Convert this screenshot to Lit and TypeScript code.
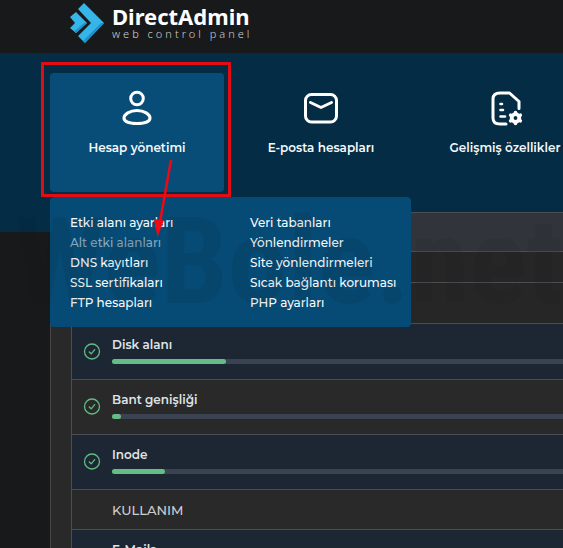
import { LitElement, html, svg, css } from "lit";
import { customElement, property } from "lit/decorators.js";

interface Resource {
  name: string;
  used: number;
}

const userIcon = svg`
  <circle cx="18" cy="8.500" r="6.300"/>
  <path d="M31 28c0 3.600-5.800 5.500-13 5.500s-13-1.900-13-5.500 5.800-7.500 13-7.500 13 3.900 13 7.500z"/>`;
const mailIcon = svg`
  <rect x="2.500" y="4.500" width="31" height="27.500" rx="6"/>
  <path d="M7.500 12.500l10.500 5 10.500-5"/>`;
const featureIcon = svg`
  <path d="M19 34h-6c-4.500 0-7-2-7-6v-19c0-4 2.500-6 7-6h9.500L32 11.500v7"/>
  <path d="M13.500 14h1.500M13.500 20h2.500M13.500 26.500h4.500" stroke-width="2.600"/>
  <circle cx="28.500" cy="28" r="3.800" stroke-width="3.800"/>
  <path d="M28.500 22.500v1M28.500 32.500v1M23.700 25.200l1 .6M32.300 30.200l1 .6M33.300 25.200l-1 .6M24.700 30.200l-1 .6" stroke-width="3.600"/>`;

@customElement("nav-tile")
class NavTile extends LitElement {
  @property() label = "";
  @property({ attribute: false }) icon: unknown;
  @property({ type: Boolean }) open = false;

  static styles = css`
    :host { display: block; }
    .tile {
      width: 100%;
      height: 119px;
      box-sizing: border-box;
      display: flex;
      flex-direction: column;
      align-items: center;
      gap: 12px;
      padding: 17px 0 0;
      border: 0;
      border-radius: 4px;
      background: transparent;
      color: #f4f8fa;
      font: 600 12px/20px Montserrat, Inter, sans-serif;
      white-space: nowrap;
      cursor: pointer;
    }
    .tile[aria-expanded="true"] { background: #074d78; }
    .icon {
      width: 36px;
      height: 36px;
      overflow: visible;
      fill: none;
      stroke: #ffffff;
      stroke-width: 3;
      stroke-linecap: round;
      stroke-linejoin: round;
    }
  `;

  render() {
    return html`<button class="tile" aria-expanded=${this.open ? "true" : "false"}>
      <svg class="icon" viewBox="0 0 36 36" aria-hidden="true">${this.icon}</svg>
      <span>${this.label}</span>
    </button>`;
  }
}

@customElement("app-root")
class AppRoot extends LitElement {
  private links = [
    "Etki alanı ayarları", "Alt etki alanları", "DNS kayıtları", "SSL sertifikaları", "FTP hesapları",
    "Veri tabanları", "Yönlendirmeler", "Site yönlendirmeleri", "Sıcak bağlantı koruması", "PHP ayarları",
  ];

  private resources: Resource[] = [
    { name: "Disk alanı", used: 25.2 },
    { name: "Bant genişliği", used: 2 },
    { name: "Inode", used: 11.8 },
  ];

  static styles = css`
    :host {
      display: block;
      position: relative;
      height: 100vh;
      overflow: hidden;
      background: #18191a;
      color: #dfe3e6;
      font: 600 12px/20px Montserrat, Inter, sans-serif;
    }
    .header {
      height: 53px;
      box-sizing: border-box;
      padding: 0 70px;
      display: flex;
      align-items: flex-start;
      background: #18191a;
    }
    .brand {
      display: flex;
      gap: 8px;
      padding-top: 3px;
      color: #ffffff;
      text-decoration: none;
    }
    .mark { width: 34px; height: 40px; }
    .words { display: flex; flex-direction: column; padding-top: 1px; }
    .name { font: 700 22px/24px "Noto Sans", sans-serif; }
    .tagline { font: 300 11px/12px "Noto Sans", sans-serif; letter-spacing: 3px; color: #cfd2d4; white-space: nowrap; }
    .nav {
      height: 179px;
      box-sizing: border-box;
      padding: 20px 0 0 50px;
      background: #042c45;
      position: relative;
    }
    .tiles { display: grid; grid-template-columns: repeat(3, 174px); gap: 10px; }
    .menu {
      position: absolute;
      z-index: 2;
      left: 50px;
      top: 144px;
      width: 361px;
      height: 130px;
      box-sizing: border-box;
      margin: 0;
      padding: 16px 20px 14px;
      display: grid;
      grid-template-columns: 180px 1fr;
      grid-template-rows: repeat(5, 20px);
      grid-auto-flow: column;
      list-style: none;
      border-radius: 4px;
      background: #064b75;
      font-weight: 500;
    }
    .link { color: #f8fbfd; text-decoration: none; white-space: nowrap; }
    .link.hovered { color: #88a9be; }
    .panel {
      position: relative;
      z-index: 1;
      margin: -20px 0 0 50px;
      padding-left: 20px;
      border-left: 1px solid #454749;
      background: #29292a;
    }
    .rows { border-left: 1px solid #4d5053; }
    .row { box-sizing: border-box; border-top: 1px solid #4a4e52; padding-left: 40px; }
    .heading { height: 39px; background: #31343b; }
    .toolbar { height: 31px; background: #262627; }
    .columns { height: 41px; background: #262627; }
    .resource {
      height: 55px;
      display: grid;
      grid-template-columns: 28px 1fr;
      align-items: center;
      padding-left: 12px;
    }
    .resource:nth-child(4) { height: 56px; }
    .tinted { background: #1d2734; }
    .check { width: 18px; height: 18px; margin-left: -1px; fill: none; stroke: #61bb83; stroke-linecap: round; stroke-linejoin: round; }
    .usage { display: flex; flex-direction: column; gap: 4px; padding-bottom: 5px; }
    .track { height: 5px; border-radius: 3px 0 0 3px; background: #3b4352; }
    .fill { height: 5px; border-radius: 3px; background: #65bc85; }
    .caption { height: 40px; margin: 0; font: 500 13px/40px Montserrat, Inter, sans-serif; color: #cccfd1; }
    .entry { height: 55px; padding-top: 10px; }
    .watermark {
      position: absolute;
      z-index: 3;
      left: 15px;
      top: 202px;
      font: 700 120px/120px "Liberation Sans Narrow", "Roboto Condensed", "Liberation Sans", sans-serif;
      white-space: nowrap;
      color: #101418;
      opacity: 0.08;
      pointer-events: none;
    }
    .annotation {
      position: absolute;
      z-index: 4;
      left: 41px;
      top: 62px;
      width: 190px;
      height: 180px;
      pointer-events: none;
    }
  `;

  private renderResource(item: Resource, index: number) {
    return html`<div class="row resource ${index % 2 ? "" : "tinted"}">
      <svg class="check" viewBox="0 0 18 18" aria-hidden="true">
        <circle cx="9" cy="8.500" r="7.500" stroke-width="1.300"/>
        <path d="M6.300 9l1.900 1.800 3.500-4.200" stroke-width="1.300"/>
      </svg>
      <div class="usage">
        <span>${item.name}</span>
        <div class="track" role="progressbar" aria-label=${item.name} aria-valuenow=${item.used}>
          <div class="fill" style="width:${item.used}%"></div>
        </div>
      </div>
    </div>`;
  }

  render() {
    return html`
      <header class="header">
        <a class="brand" href="#">
          <svg class="mark" viewBox="0 0 34 40" aria-hidden="true">
            <path fill="#35b5e9" d="M14 0L34 20 15 40 8 33 21 20 8 6z"/>
            <path fill="#35b5e9" d="M6 9L17 20 6 30 0 25 5 20 0 14z"/>
            <path fill="#1f93c8" d="M34 20L15 40 13 38 31 20zM17 20L6 30 4 28.500 14 20z"/>
          </svg>
          <span class="words">
            <span class="name">DirectAdmin</span>
            <span class="tagline">web control panel</span>
          </span>
        </a>
      </header>
      <nav class="nav">
        <div class="tiles">
          <nav-tile open label="Hesap yönetimi" .icon=${userIcon}></nav-tile>
          <nav-tile label="E-posta hesapları" .icon=${mailIcon}></nav-tile>
          <nav-tile label="Gelişmiş özellikler" .icon=${featureIcon}></nav-tile>
        </div>
        <ul class="menu">
          ${this.links.map((text, i) => html`<li><a class="link ${i === 1 ? "hovered" : ""}" href="#">${text}</a></li>`)}
        </ul>
      </nav>
      <main class="panel">
        <div class="rows">
          <div class="row heading"></div>
          <div class="row toolbar"></div>
          <div class="row columns"></div>
          ${this.resources.map((item, i) => this.renderResource(item, i))}
          <h2 class="row caption">KULLANIM</h2>
          <div class="row entry tinted">E-Mails</div>
        </div>
      </main>
      <div class="watermark" aria-hidden="true">WeBole.net</div>
      <svg class="annotation" viewBox="0 0 190 180" aria-hidden="true">
        <rect x="1.500" y="1.500" width="187" height="132" fill="none" stroke="#e30c14" stroke-width="3"/>
        <path d="M130 98L119 160" stroke="#f00914" stroke-width="2.500"/>
        <path d="M113 157l10 1-6.500 17z" fill="#f00914"/>
      </svg>
    `;
  }
}
